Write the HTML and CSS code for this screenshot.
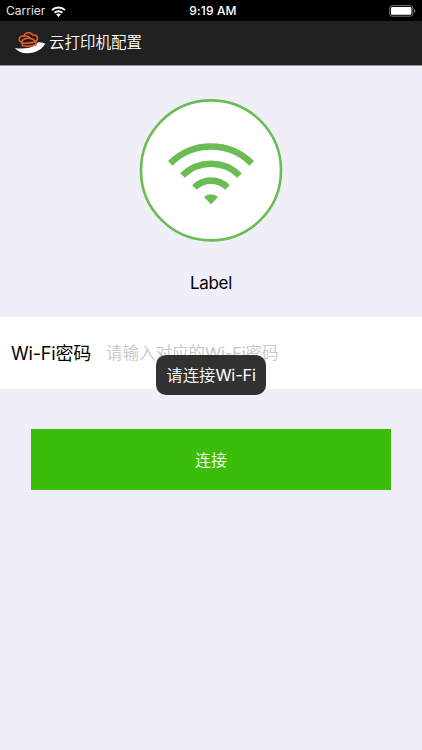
FILE: index.html
```html
<!DOCTYPE html>
<html lang="zh-CN">
<head>
<meta charset="utf-8">
<title>云打印机配置</title>
<link rel="stylesheet" href="styles.css">
</head>
<body>
<div class="status">
  <div class="carrier"><span>Carrier</span>
    <svg width="15" height="11" viewBox="0 0 15 11"><g fill="none" stroke="#fff" stroke-width="2"><path d="M1 4.1a9.2 9.2 0 0 1 13 0"/><path d="M3.6 6.8a5.5 5.5 0 0 1 7.8 0"/></g><path d="M7.5 11L5.2 8.6a3.3 3.3 0 0 1 4.6 0z" fill="#fff"/></svg>
  </div>
  <div class="time">9:19 AM</div>
  <svg class="battery" width="27" height="12" viewBox="0 0 27 12"><rect x=".6" y=".6" width="23.2" height="10.6" rx="2.6" fill="none" stroke="#737373"/><rect x="2" y="2" width="20.4" height="7.8" rx="1.2" fill="#fff"/><path d="M25 4v4q1.4-.5 1.4-2T25 4z" fill="#737373"/></svg>
</div>
<header class="navbar">
  <svg class="logo" width="32" height="22" viewBox="0 0 32 22"><path d="M.8 16Q8 17.2 15 15.8Q22 14 24 10.2Q29 10 31.3 11.8Q27.5 18 20.5 20.3Q7 23.4 .8 16z" fill="#fff"/><g fill="none" stroke="#f15a29" stroke-width="1.5" stroke-linejoin="round" stroke-linecap="round"><path d="M8.5 13.6L7.8 10.2Q4 8.8 5.6 5.8Q7.3 3.4 9.8 4.2Q10.8 .8 14.7 .8Q17.6 .8 18.7 3.1Q22.5 2.6 23.4 5.2Q24 8 21.8 9.2L22 12.8Q15 15 8.5 13.6z" fill="#212121"/><path d="M9.8 4.2Q14 3.5 15.8 5.8M7.8 10.2Q8.4 7.1 13 6.3Q17.8 5.5 21.8 9.2M8.4 11.2Q15.5 11.6 21.8 9.8"/></g></svg>
  <h1>云打印机配置</h1>
</header>
<main>
  <section class="hero">
    <svg width="144" height="144" viewBox="0 0 144 144"><circle cx="72" cy="72.4" r="70" fill="#fff" stroke="#6abd55" stroke-width="2.6"/><g fill="none" stroke="#6abd55" stroke-width="6.6"><path d="M31.3 65.3a57.6 57.6 0 0 1 81.4 0"/><path d="M43.5 77.5a40.3 40.3 0 0 1 57 0"/><path d="M55.5 89.5a23.3 23.3 0 0 1 33 0"/></g><path d="M72 106.2l-7.1-7.1a10 10 0 0 1 14.2 0z" fill="#6abd55"/></svg>
    <p class="ssid">Label</p>
  </section>
  <section class="field">
    <label for="pwd"><span class="latin">Wi-Fi</span>密码</label>
    <div class="hint" id="pwd">请输入对应的<span class="latin">Wi-Fi</span>密码</div>
  </section>
  <button class="connect">连接</button>
</main>
<div class="toast">请连接<span class="latin">Wi-Fi</span></div>
</body>
</html>
```
FILE: styles.css
```css
* { box-sizing: border-box; }
body {
  margin: 0;
  height: 750px;
  overflow: hidden;
  position: relative;
  background: #f0eff7;
  color: #000;
  font-family: Inter, "Noto Sans CJK SC", sans-serif;
}
svg { display: block; flex: none; }
.latin { letter-spacing: -.2px; font-weight: 400; }
.status {
  height: 21px;
  padding: 0 6px;
  display: grid;
  grid-template-columns: 1fr auto 1fr;
  align-items: center;
  background: #000;
  color: #fff;
  font-size: 12px;
  line-height: 22px;
}
.carrier { display: flex; align-items: center; gap: 6px; color: #e4e4e4; }
.time { font-weight: 500; padding-left: 4px; letter-spacing: .15px; }
.battery { justify-self: end; }
.navbar {
  height: 45px;
  padding-left: 14px;
  display: flex;
  align-items: center;
  gap: 3px;
  background: #212121;
  border-bottom: 1px solid #969599;
  color: #fff;
}
.navbar h1 { margin: 0; font-size: 15.5px; font-weight: 350; line-height: 22px; }
.logo { margin-bottom: 1px; }
.hero {
  height: 251px;
  padding-top: 32px;
  display: flex;
  flex-direction: column;
  align-items: center;
}
.ssid { margin: 29px 0 0; font-size: 17px; line-height: 24px; letter-spacing: -.3px; }
.field {
  height: 72px;
  padding: 0 0 2px 11px;
  display: flex;
  align-items: center;
  background: #fff;
  white-space: nowrap;
}
.field label { width: 95px; font-size: 18px; }
.hint { font-size: 16.5px; color: #c5c5ca; font-weight: 350; }
.connect {
  display: block;
  width: 360px;
  height: 61px;
  margin: 40px 0 0 31px;
  padding: 0;
  border: 0;
  background: #3abe09;
  color: #fff;
  font: 350 16px/61px "Noto Sans CJK SC", sans-serif;
}
.toast {
  position: absolute;
  left: 156px;
  top: 355px;
  width: 110px;
  height: 40px;
  border-radius: 10px;
  background: rgba(34, 34, 34, .93);
  color: #fff;
  font-size: 16.4px;
  font-weight: 350;
  line-height: 41px;
  text-align: center;
  white-space: nowrap;
}
```
